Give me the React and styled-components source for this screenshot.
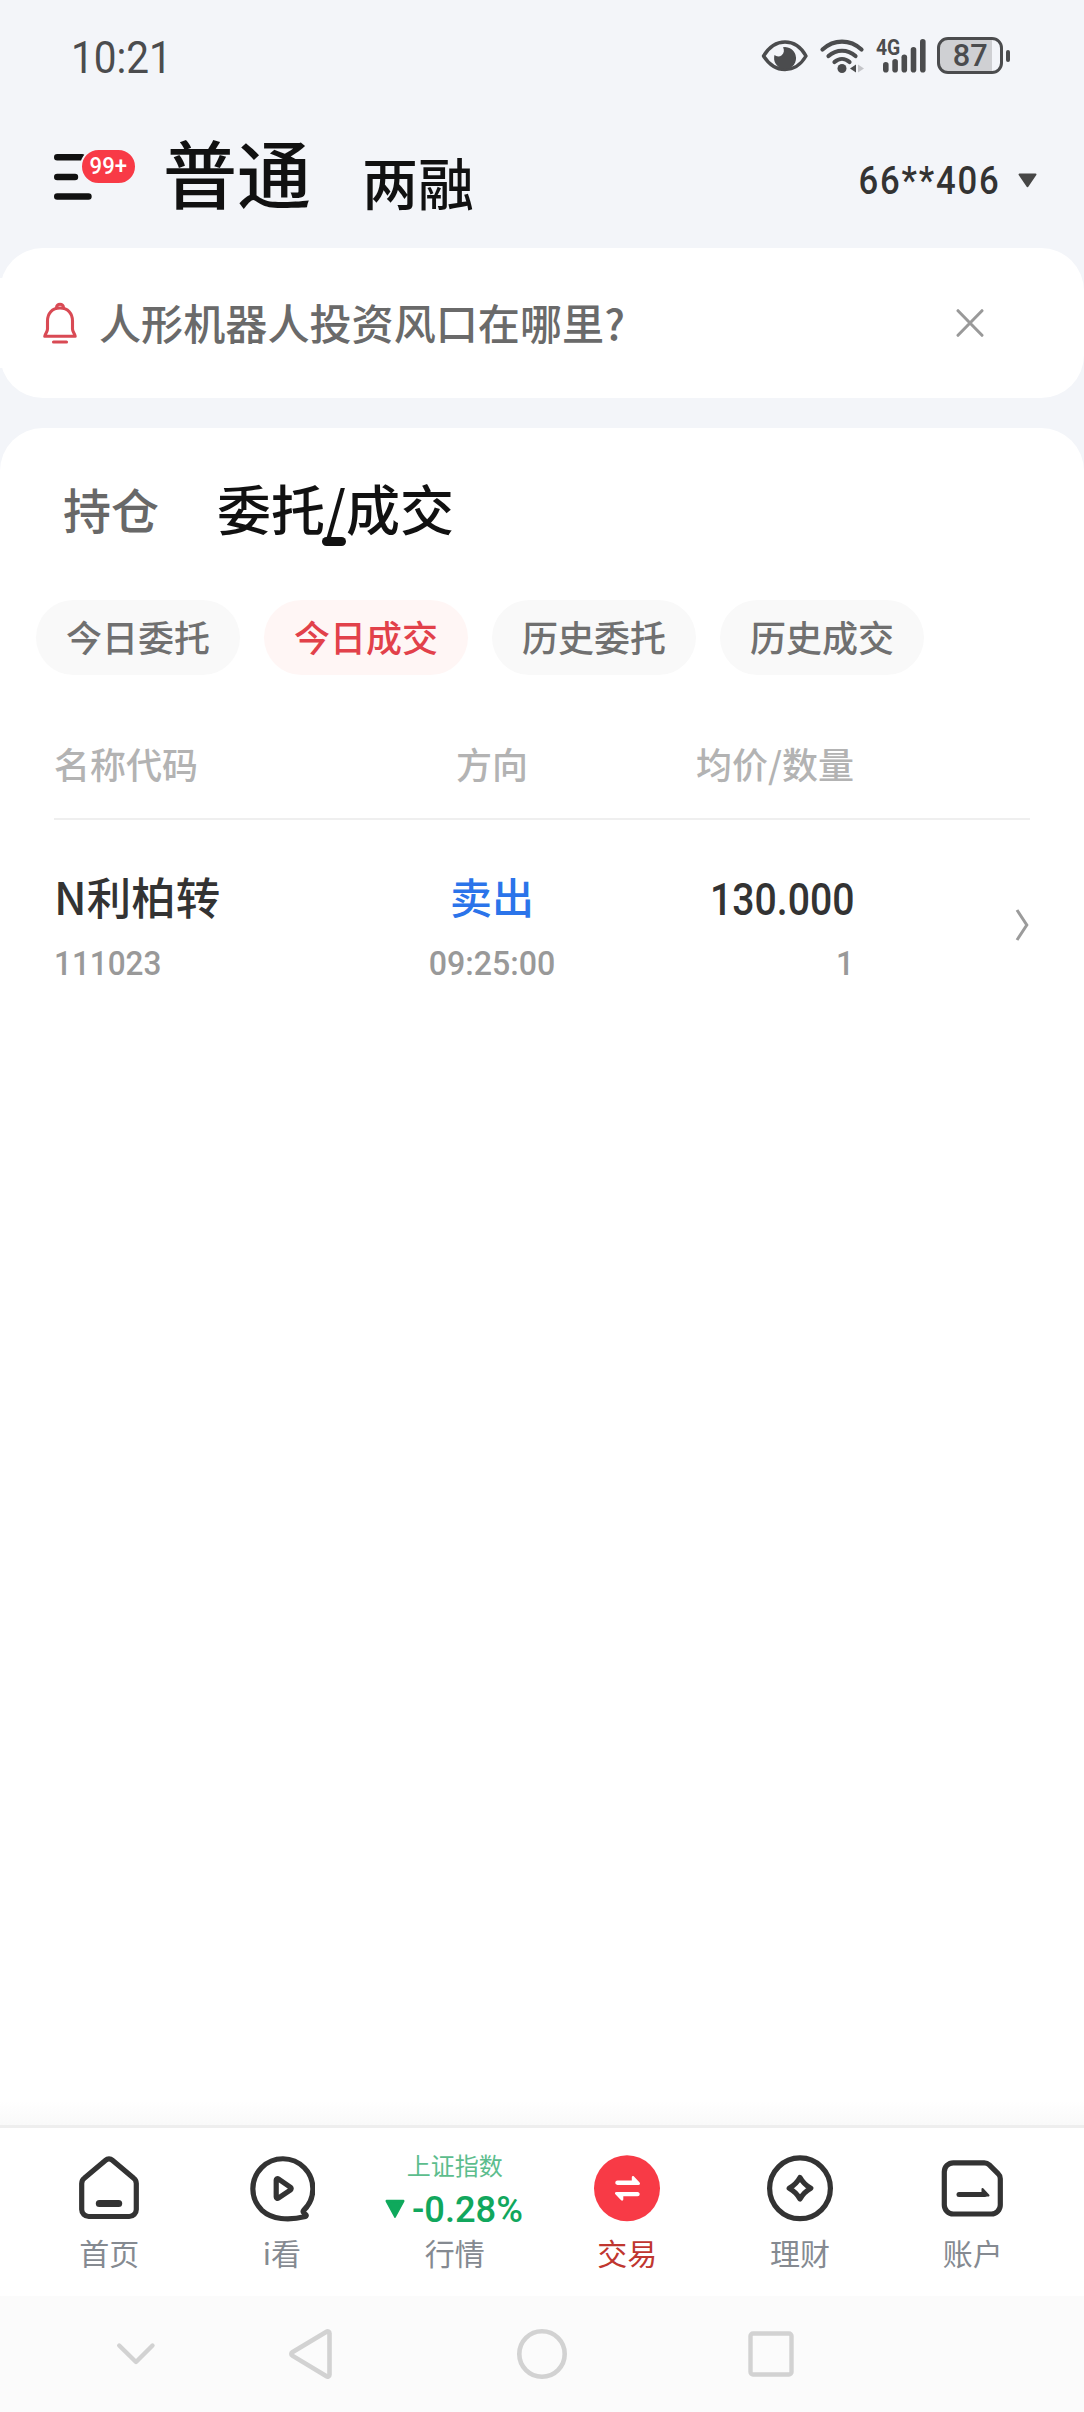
import React from "react";
import styled, { createGlobalStyle } from "styled-components";

const GlobalStyle = createGlobalStyle`
  * { box-sizing: border-box; }
  body {
    margin: 0;
    background: #f3f5f9;
    font-family: "Noto Sans CJK SC", "Noto Sans", sans-serif;
    font-weight: 500;
  }
  svg { display: block; flex: none; }
`;

const Screen = styled.div`
  width: 1084px;
  height: 2412px;
  display: flex;
  flex-direction: column;
  background: #f3f5f9;
  overflow: hidden;
`;

/* Narrow numerals: the glyphs are condensed horizontally inside their line */
const Num = styled.span`
  display: inline-block;
  font-family: Roboto, "Noto Sans CJK SC", sans-serif;
  font-size: ${(p) => p.$size}px;
  font-weight: ${(p) => p.$weight || 500};
  line-height: 1.2;
  letter-spacing: ${(p) => p.$spacing || 0}px;
  padding-top: ${(p) => p.$drop || 0}px;
  white-space: nowrap;
  color: ${(p) => p.$color};
  transform: scaleX(${(p) => p.$condense || 0.9});
  transform-origin: ${(p) => p.$origin || "left"} center;
`;

const StatusBar = styled.div`
  height: 112px;
  flex: none;
  display: flex;
  align-items: center;
  justify-content: space-between;
  padding: 2px 74px 0 71px;
`;

const StatusIcons = styled.div`
  display: flex;
  align-items: center;
  gap: 10.5px;
  padding-bottom: 3px;
`;

const Signal = styled.div`
  position: relative;
  width: 51px;
  height: 36px;
`;

const SignalLabel = styled.span`
  position: absolute;
  left: 0;
  top: -3px;
`;

const Battery = styled.div`
  display: flex;
  align-items: center;
  gap: 3px;
`;

const BatteryBody = styled.div`
  width: 66px;
  height: 37px;
  border: 3px solid #4b4c4e;
  border-radius: 11px;
  display: flex;
  align-items: center;
  justify-content: center;
  background: linear-gradient(to right, #cfd0d3 0 87%, #f3f5f9 87%);
`;

const BatteryTip = styled.div`
  width: 4px;
  height: 12px;
  border-radius: 2px;
  background: #4b4c4e;
`;

const Header = styled.header`
  height: 136px;
  flex: none;
  display: flex;
  align-items: center;
  padding: 0 47px 18px 54px;
`;

const MenuButton = styled.div`
  position: relative;
  width: 82px;
  height: 46px;
  margin-top: 12px;
`;

const Badge = styled.div`
  position: absolute;
  left: 26px;
  top: -6px;
  width: 57px;
  height: 37px;
  border: 2px solid #f3f5f9;
  border-radius: 19px;
  background: #f83a46;
  display: flex;
  align-items: center;
  justify-content: center;
`;

const Modes = styled.div`
  display: flex;
  align-items: flex-end;
  margin-left: 27px;
  gap: 51px;
  flex: 1;
`;

const Mode = styled.span`
  font-size: ${(p) => (p.$active ? 74 : 56)}px;
  line-height: ${(p) => (p.$active ? 84 : 64)}px;
  color: #111;
`;

const Account = styled.div`
  display: flex;
  align-items: center;
  margin-top: 19px;
  gap: 18px;
`;

const Notice = styled.section`
  height: 150px;
  flex: none;
  display: flex;
  align-items: center;
  border-radius: 43px;
  background: #fff;
  padding-right: 100px;
  margin-bottom: 30px;
`;

const NoticeRow = styled.div`
  flex: 1;
  height: 90px;
  display: flex;
  align-items: center;
  padding-left: 43px;
  background: #fff;
`;

const NoticeText = styled.span`
  flex: 1;
  margin: -3px 0 0 22px;
  font-size: 42.1px;
  line-height: 60px;
  color: #6a6a6a;
`;

const Panel = styled.main`
  flex: 1;
  display: flex;
  flex-direction: column;
  border-radius: 43px 43px 0 0;
  background: #fff;
`;

const Tabs = styled.nav`
  display: flex;
  align-items: center;
  height: 118px;
  margin-top: 22px;
  padding: 0 63px;
  gap: 58px;
`;

const Tab = styled.div`
  position: relative;
  font-size: ${(p) => (p.$active ? 54 : 48)}px;
  line-height: 70px;
  margin-top: -3px;
  color: ${(p) => (p.$active ? "#111" : "#686868")};

  &::after {
    content: "";
    display: ${(p) => (p.$active ? "block" : "none")};
    position: absolute;
    left: 50%;
    bottom: -3px;
    width: 24px;
    height: 9px;
    margin-left: -14px;
    border-radius: 5px;
    background: #111;
  }
`;

const Chips = styled.div`
  display: flex;
  gap: 24px;
  margin-top: 32px;
  padding: 0 36px;
`;

const Chip = styled.button`
  width: 204px;
  height: 75px;
  border: 0;
  border-radius: 38px;
  padding: 0 0 4px;
  font: inherit;
  font-size: 36px;
  line-height: 50px;
  background: ${(p) => (p.$active ? "#fff6f5" : "#f9f9f9")};
  color: ${(p) => (p.$active ? "#e2414a" : "#707070")};
`;

const Table = styled.div`
  margin: 43px 54px 0;
`;

const TableHead = styled.div`
  display: grid;
  grid-template-columns: 280px 316px 204px 1fr;
  align-items: center;
  height: 102px;
  padding-bottom: 10px;
  border-bottom: 2px solid #efefef;
  font-size: 36px;
  line-height: 50px;
  color: #b3b3b3;
`;

const Cell = styled.div`
  display: flex;
  flex-direction: column;
  align-items: ${(p) => p.$align || "flex-start"};
`;

const TradeRow = styled.div`
  display: grid;
  grid-template-columns: 280px 316px 204px 1fr;
  align-items: center;
  height: 200px;
  padding-top: 10px;
`;

const Primary = styled.div`
  height: 64px;
  line-height: 64px;
  font-size: ${(p) => p.$size || 44.5}px;
  color: ${(p) => p.$color || "#333"};
  display: flex;
  align-items: center;
`;

const Secondary = styled.div`
  height: 44px;
  margin-top: 14px;
  display: flex;
  align-items: center;
`;

const RowArrow = styled.div`
  display: flex;
  justify-content: flex-end;
  padding-right: 1px;
`;

const Fade = styled.div`
  height: 24px;
  margin-top: auto;
  background: linear-gradient(to bottom, #fff, #f9f9f9);
`;

const BottomTabs = styled.nav`
  height: 171px;
  flex: none;
  display: grid;
  grid-template-columns: repeat(6, 1fr);
  border-top: 3px solid #eee;
  background: #fff;
  padding: 27px 25px 0 23px;
`;

const BottomTab = styled.div`
  display: flex;
  flex-direction: column;
  align-items: center;
`;

const BottomLabel = styled.span`
  font-size: 30px;
  line-height: 40px;
  font-weight: 400;
  margin-top: 10px;
  color: ${(p) => (p.$active ? "#c0362f" : "#858a91")};
`;

const IndexBox = styled.div`
  height: 67px;
  display: flex;
  flex-direction: column;
  align-items: center;
`;

const IndexName = styled.span`
  font-size: 24px;
  line-height: 30px;
  margin-top: -5px;
  font-weight: 400;
  color: #5cbd8d;
`;

const IndexChange = styled.div`
  display: flex;
  align-items: center;
  gap: 7px;
  width: 139px;
  height: 40px;
  margin-top: 9px;
`;

const SystemNav = styled.div`
  height: 116px;
  flex: none;
  display: flex;
  align-items: center;
  background: #fbfbfb;
  padding-left: 116px;
`;

const NavKey = styled.div`
  width: ${(p) => p.$width}px;
  margin-right: ${(p) => p.$after || 0}px;
`;

const EyeIcon = () => (
  <svg width="48" height="34" viewBox="0 0 48 34" fill="none">
    <path d="M2.5 17C8 8 15 3 24 3s16 5 21 14c-5 8.500-12 13.500-21 13.500S8 25.500 2.500 17Z" stroke="#4b4c4e" strokeWidth="3.400" strokeLinejoin="round" />
    <path d="M22 8.300A11 11 0 1 1 13.500 16c2 1.700 5 1.900 7.200.2 2.500-2 2.800-5.200 1.300-7.900Z" fill="#4b4c4e" />
  </svg>
);

const WifiIcon = () => (
  <svg width="46" height="36" viewBox="0 0 46 36" fill="none" stroke="#4b4c4e" strokeWidth="4.200" strokeLinecap="round">
    <path d="M3.500 11.500C15 1 31 1 42.500 11.500" />
    <path d="M9.500 18c8-7 19-7 27 0" />
    <path d="M15.500 24c4.500-4 10.500-4 15 0" />
    <circle cx="23" cy="30.500" r="4.500" fill="#4b4c4e" stroke="none" />
    <path d="M37 26.500v8l-6-4Z" fill="#4b4c4e" stroke="none" />
    <path d="M39 26.500v8l6-4Z" fill="#c4c5c9" stroke="none" />
  </svg>
);

const SignalBars = () => (
  <svg width="51" height="36" viewBox="0 0 51 36" fill="#4b4c4e">
    <rect x="7" y="24" width="5.600" height="10.500" rx="2.800" />
    <rect x="16.300" y="21" width="5.600" height="13.500" rx="2.800" />
    <rect x="25.500" y="16.500" width="5.600" height="18" rx="2.800" />
    <rect x="34.700" y="9" width="5.600" height="25.500" rx="2.800" />
    <rect x="44" y="1" width="5.600" height="33.500" rx="2.800" />
  </svg>
);

const MenuIcon = () => (
  <svg width="40" height="46" viewBox="0 0 40 46" stroke="#111" strokeWidth="6.400" strokeLinecap="round">
    <path d="M3.200 3.200H28M3.200 23H21M3.200 42.500H34.500" />
  </svg>
);

const CaretDown = ({ color, width = 19, height = 15 }) => (
  <svg width={width} height={height} viewBox="0 0 19 15" preserveAspectRatio="none">
    <path d="M1.500 1.500h16L9.500 13.200Z" fill={color} stroke={color} strokeWidth="2" strokeLinejoin="round" />
  </svg>
);

const BellIcon = () => (
  <svg width="34" height="42" viewBox="0 0 34 42" fill="none" stroke="#d94a54" strokeWidth="3.100" strokeLinecap="round" strokeLinejoin="round">
    <path d="M17 6C9 6 4.500 11.500 4.500 19v8c0 3-2 4-2.700 7.300h30.400C31.500 31 29.500 30 29.500 27v-8C29.500 11.500 25 6 17 6Z" />
    <path d="M13.500 5.500c.6-4.400 6.400-4.400 7 0" />
    <path d="M10.500 40h13" />
  </svg>
);

const CloseIcon = () => (
  <svg width="28" height="28" viewBox="0 0 28 28" stroke="#999" strokeWidth="3" strokeLinecap="round">
    <path d="M2 1.700l24 24.600M26 1.700L2 26.300" />
  </svg>
);

const ArrowIcon = () => (
  <svg width="14" height="32" viewBox="0 0 14 32" fill="none" stroke="#9b9b9b" strokeWidth="3">
    <path d="M2 1l9.800 15L2 31" />
  </svg>
);

const HomeIcon = () => (
  <svg width="66" height="67" viewBox="0 0 66 67" fill="none" stroke="#333" strokeWidth="5.200" strokeLinejoin="round">
    <path d="M29.600 5.200a5.200 5.200 0 0 1 6.800 0L57.500 23a7 7 0 0 1 2.800 5.500v26a7 7 0 0 1-7 7H12.700a7 7 0 0 1-7-7v-26A7 7 0 0 1 8.500 23Z" />
    <path d="M23.300 48.600h19.400" strokeWidth="7" strokeLinecap="round" />
  </svg>
);

const WatchIcon = () => (
  <svg width="66" height="67" viewBox="0 0 66 67" fill="none" stroke="#333" strokeWidth="5.200" strokeLinejoin="round">
    <path d="M54.500 55.500A30 30 0 1 0 13 55.300c10 9.200 26.500 10.500 43.500 6.200.8-.2 1-1.200.4-1.700l-2.300-2.200c-.7-.6-.7-1.500-.1-2.100Z" />
    <path d="M27.200 25v17c0 1 1.200 1.700 2.100 1.100l12.300-8.300c.8-.6.8-1.800 0-2.400l-12.300-8.500c-.9-.6-2.100.1-2.100 1.100Z" />
  </svg>
);

const TradeIcon = () => (
  <svg width="66" height="67" viewBox="0 0 66 67">
    <circle cx="33" cy="33.300" r="33" fill="#f83a46" />
    <path d="M23.500 25.600h14.300v-3.100c0-1.400 1.200-1.900 2.200-1l5.400 5.700c1.200 1.300.6 2.700-.9 2.700h-21c-2.900 0-2.900-4.300 0-4.300Z" fill="#fff" />
    <path d="M43.500 41.200H29.300v3c0 1.400-1.200 1.900-2.200 1l-5.500-5.700c-1.200-1.300-.6-2.600.9-2.600h21c2.900 0 2.900 4.300 0 4.300Z" fill="#fff" />
  </svg>
);

const WealthIcon = () => (
  <svg width="66" height="67" viewBox="0 0 66 67" fill="none" stroke="#333" strokeWidth="5.200" strokeLinejoin="round">
    <circle cx="33" cy="33.300" r="30.400" />
    <path d="M33 22.500c2.500 4.500 6 8 10.800 10.800C39 36 35.500 39.500 33 44c-2.500-4.500-6-8-10.800-10.700C27 30.500 30.500 27 33 22.500Z" />
  </svg>
);

const AccountIcon = () => (
  <svg width="66" height="67" viewBox="0 0 66 67" fill="none" stroke="#333" strokeWidth="5.200" strokeLinejoin="round">
    <path d="M13.300 7.800h31c2 0 3.600.7 5 2l9 9c1.400 1.300 2 3 2 4.900V50a9 9 0 0 1-9 9h-38a9 9 0 0 1-9-9V16.800a9 9 0 0 1 9-9Z" />
    <path d="M19 39.500h25.500" strokeLinecap="round" strokeWidth="5" />
    <path d="M42.500 38V34L48.500 40.500H42.500Z" fill="#333" strokeWidth="2" />
  </svg>
);

const tabs = [
  { label: "首页", icon: <HomeIcon /> },
  { label: "i看", icon: <WatchIcon /> },
  { label: "行情", index: { name: "上证指数", change: "-0.28%" } },
  { label: "交易", icon: <TradeIcon />, active: true },
  { label: "理财", icon: <WealthIcon /> },
  { label: "账户", icon: <AccountIcon /> },
];

const chips = ["今日委托", "今日成交", "历史委托", "历史成交"];

export default function App() {
  return (
    <Screen>
      <GlobalStyle />
      <StatusBar>
        <Num $size={45} $weight={400} $color="#4b4c4e" $condense={0.9} $drop={2}>10:21</Num>
        <StatusIcons>
          <EyeIcon />
          <WifiIcon />
          <Signal>
            <SignalBars />
            <SignalLabel>
              <Num $size={22} $weight={700} $color="#4b4c4e" $condense={0.88}>4G</Num>
            </SignalLabel>
          </Signal>
          <Battery>
            <BatteryBody>
              <Num $size={32} $color="#4b4c4e" $condense={0.96} $origin="center">87</Num>
            </BatteryBody>
            <BatteryTip />
          </Battery>
        </StatusIcons>
      </StatusBar>

      <Header>
        <MenuButton>
          <MenuIcon />
          <Badge>
            <Num $size={24} $color="#fff" $condense={0.92} $origin="center">99+</Num>
          </Badge>
        </MenuButton>
        <Modes>
          <Mode $active>普通</Mode>
          <Mode>两融</Mode>
        </Modes>
        <Account>
          <Num $size={39} $color="#333" $condense={0.89} $spacing={2} $drop={2} $origin="right">66**406</Num>
          <CaretDown color="#474747" />
        </Account>
      </Header>

      <Notice>
        <NoticeRow>
          <BellIcon />
          <NoticeText>人形机器人投资风口在哪里?</NoticeText>
          <CloseIcon />
        </NoticeRow>
      </Notice>

      <Panel>
        <Tabs>
          <Tab>持仓</Tab>
          <Tab $active>委托/成交</Tab>
        </Tabs>
        <Chips>
          {chips.map((c, i) => (
            <Chip key={c} $active={i === 1}>{c}</Chip>
          ))}
        </Chips>
        <Table>
          <TableHead>
            <Cell>名称代码</Cell>
            <Cell $align="center">方向</Cell>
            <Cell $align="flex-end">均价/数量</Cell>
          </TableHead>
          <TradeRow>
            <Cell>
              <Primary>N利柏转</Primary>
              <Secondary><Num $size={33.5} $color="#999" $condense={0.94}>111023</Num></Secondary>
            </Cell>
            <Cell $align="center">
              <Primary $size={42} $color="#2b74ea">卖出</Primary>
              <Secondary><Num $size={33.5} $color="#999" $condense={0.96} $origin="center">09:25:00</Num></Secondary>
            </Cell>
            <Cell $align="flex-end">
              <Primary><Num $size={43.5} $color="#333" $condense={0.9} $drop={10} $origin="right">130.000</Num></Primary>
              <Secondary><Num $size={33.5} $color="#999" $condense={0.95} $origin="right">1</Num></Secondary>
            </Cell>
            <RowArrow><ArrowIcon /></RowArrow>
          </TradeRow>
        </Table>
        <Fade />
      </Panel>

      <BottomTabs>
        {tabs.map((t) => (
          <BottomTab key={t.label}>
            {t.index ? (
              <IndexBox>
                <IndexName>{t.index.name}</IndexName>
                <IndexChange>
                  <CaretDown color="#0fa95c" width={20} height={20} />
                  <Num $size={37} $color="#11a75d" $condense={0.98} $drop={2}>{t.index.change}</Num>
                </IndexChange>
              </IndexBox>
            ) : (
              t.icon
            )}
            <BottomLabel $active={t.active}>{t.label}</BottomLabel>
          </BottomTab>
        ))}
      </BottomTabs>

      <SystemNav>
        <NavKey $width={40} $after={132}>
          <svg width="40" height="24" viewBox="0 0 40 24" fill="none" stroke="#d2d2d2" strokeWidth="4.400" strokeLinecap="round" strokeLinejoin="round">
            <path d="M3.200 3.500L20 20 36.500 3.500" />
          </svg>
        </NavKey>
        <NavKey $width={46} $after={182}>
          <svg width="46" height="52" viewBox="0 0 46 52" fill="none" stroke="#d2d2d2" strokeWidth="4.600" strokeLinejoin="round">
            <path d="M38.500 3.700 4.300 24.300c-1.300.8-1.300 2.500 0 3.300L38.500 48.300c1.300.8 3 0 3-1.600V5.300c0-1.600-1.700-2.400-3-1.600Z" />
          </svg>
        </NavKey>
        <NavKey $width={52} $after={179}>
          <svg width="52" height="52" viewBox="0 0 52 52" fill="none" stroke="#d2d2d2" strokeWidth="4.600">
            <circle cx="26" cy="26" r="22.700" />
          </svg>
        </NavKey>
        <NavKey $width={48}>
          <svg width="48" height="48" viewBox="0 0 48 48" fill="none" stroke="#d2d2d2" strokeWidth="4.400">
            <rect x="3.500" y="3.500" width="41" height="41" rx="2.500" />
          </svg>
        </NavKey>
      </SystemNav>
    </Screen>
  );
}
